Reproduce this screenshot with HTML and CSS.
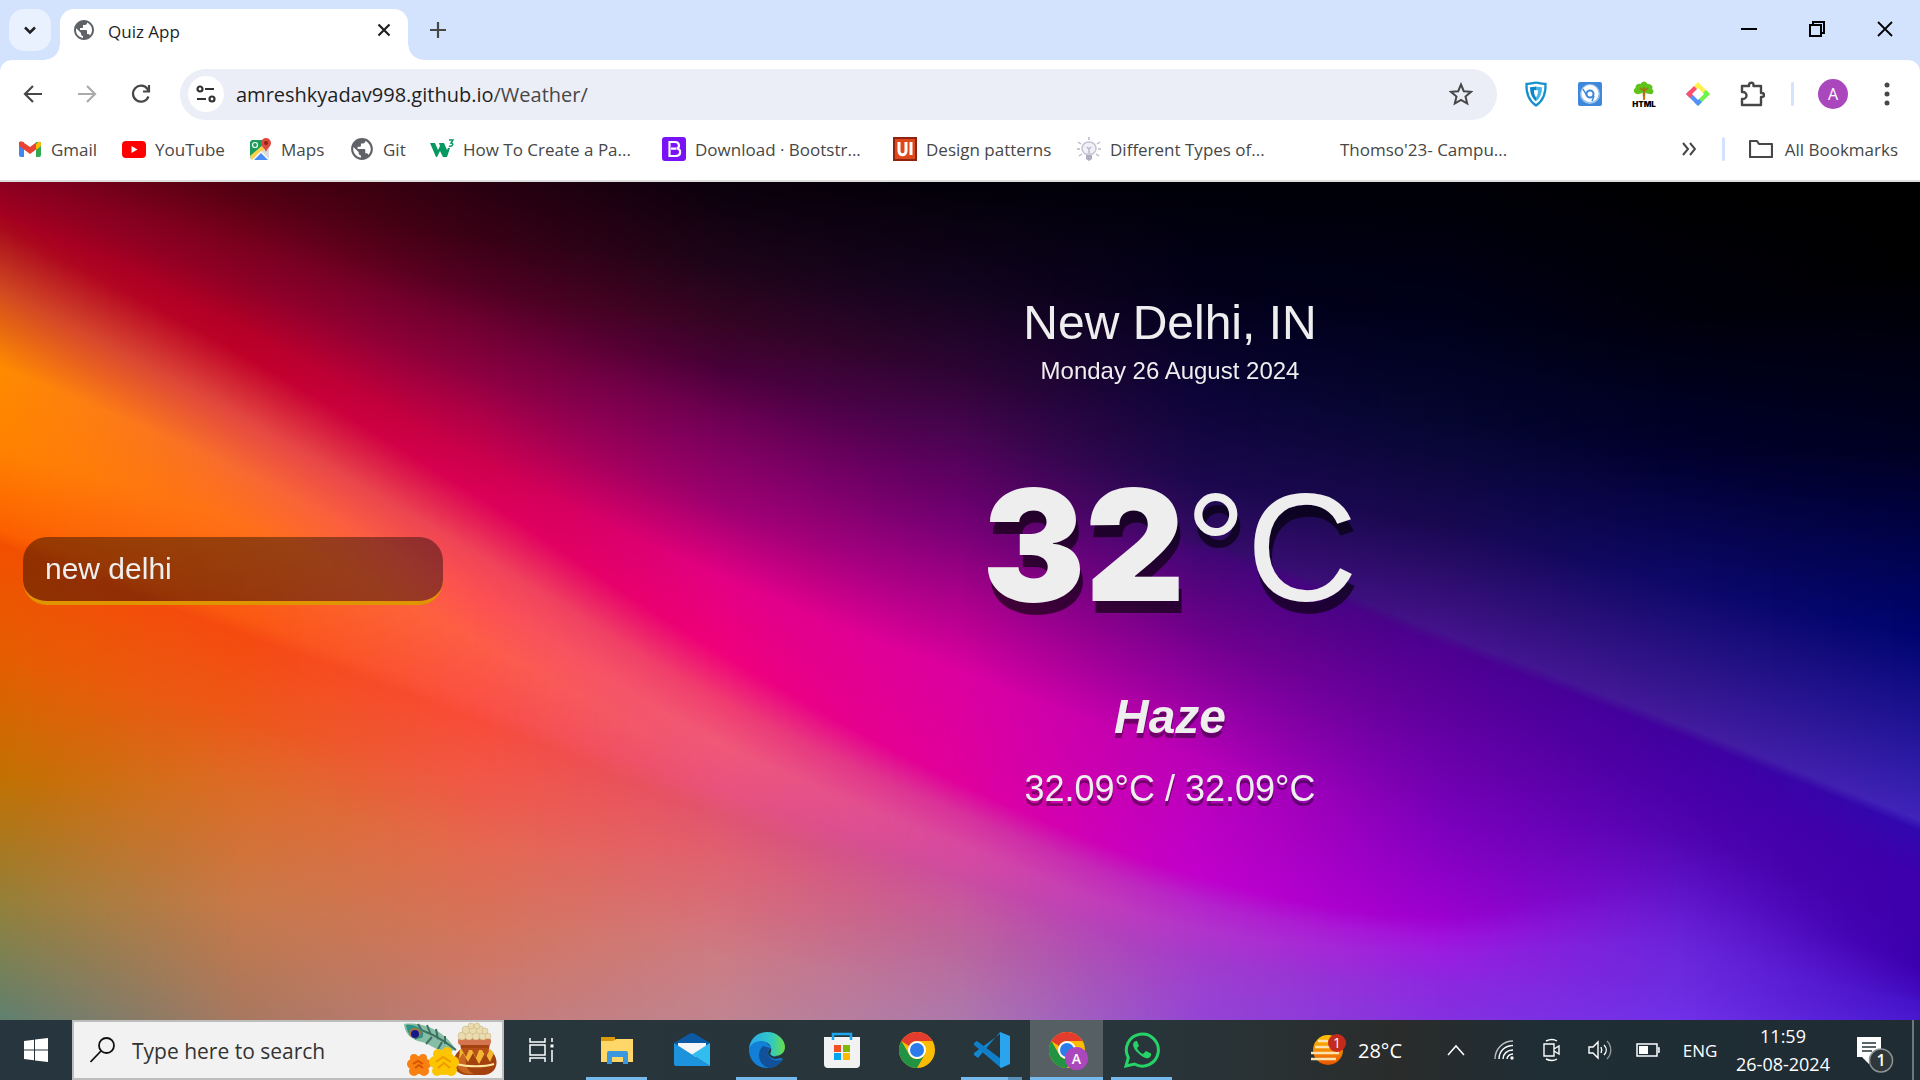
FILE: index.html
```html
<!DOCTYPE html>
<html lang="en">
<head>
<meta charset="utf-8">
<title>Quiz App</title>
<link rel="stylesheet" href="styles.css">
</head>
<body>
<svg class="defs" width="0" height="0" aria-hidden="true">
  <defs>
    <symbol id="globe" viewBox="1 1 22 22">
      <path d="M12 2C6.480 2 2 6.480 2 12s4.480 10 10 10 10-4.480 10-10S17.520 2 12 2zm-1 17.930c-3.950-.490-7-3.850-7-7.930 0-.620.080-1.210.210-1.790L9 15v1c0 1.100.900 2 2 2v1.930zm6.900-2.540c-.260-.810-1-1.390-1.900-1.390h-1v-3c0-.550-.450-1-1-1H8v-2h2c.550 0 1-.450 1-1V7h2c1.100 0 2-.900 2-2v-.410c2.930 1.190 5 4.060 5 7.410 0 2.080-.800 3.970-2.100 5.390z" fill="#5f6368"/>
    </symbol>
    <symbol id="chrome" viewBox="0 0 36 36">
      <circle cx="18" cy="18" r="18" fill="#fbbc04"/>
      <path d="M2.400 9A18 18 0 0 1 33.600 9H18a9 9 0 0 0-8 5z" fill="#e33b2e"/>
      <path d="M2.400 9A18 18 0 0 0 18 36l7.800-13.500A9 9 0 0 1 10.200 22.500z" fill="#229342"/>
      <circle cx="18" cy="18" r="9" fill="#fff"/>
      <circle cx="18" cy="18" r="7" fill="#2b7bea"/>
    </symbol>
  </defs>
</svg>

<header class="browser">
  <div class="tabstrip">
    <button class="tab-search" aria-label="Search tabs"><svg width="16" height="16" viewBox="0 0 16 16"><path d="M3 5.500l5 5 5-5" fill="none" stroke="#1f1f1f" stroke-width="2.500"/></svg></button>
    <div class="tab">
      <svg width="22" height="22"><use href="#globe"/></svg>
      <span class="tab-title">Quiz App</span>
      <button class="icon-button" aria-label="Close tab"><svg width="14" height="14" viewBox="0 0 14 14"><path d="M1.500 1.500l11 11m0-11l-11 11" stroke="#1f1f1f" stroke-width="2.200"/></svg></button>
    </div>
    <button class="new-tab" aria-label="New tab"><svg width="16" height="16" viewBox="0 0 16 16"><path d="M8 0v16M0 8h16" stroke="#474747" stroke-width="2.200"/></svg></button>
    <div class="window-controls">
      <button aria-label="Minimize"><svg width="16" height="16" viewBox="0 0 16 16"><path d="M0 7h16v2H0z"/></svg></button>
      <button aria-label="Restore"><svg width="16" height="16" viewBox="0 0 16 16"><path d="M1 4h11v11H1zM4 4V1h11v11h-3" fill="none" stroke="#000" stroke-width="2"/></svg></button>
      <button aria-label="Close"><svg width="16" height="16" viewBox="0 0 16 16"><path d="M1 1l14 14M15 1L1 15" stroke="#000" stroke-width="1.800"/></svg></button>
    </div>
  </div>

  <div class="toolbar">
    <button class="tool" aria-label="Back"><svg width="20" height="20" viewBox="0 0 20 20"><path d="M19 10H2M10 2l-8 8 8 8" fill="none" stroke="#474747" stroke-width="2.200"/></svg></button>
    <button class="tool" aria-label="Forward"><svg width="20" height="20" viewBox="0 0 20 20"><path d="M1 10h17M10 2l8 8-8 8" fill="none" stroke="#ababab" stroke-width="2.200"/></svg></button>
    <button class="tool" aria-label="Reload"><svg width="20" height="20" viewBox="0 0 20 20"><path d="M17.500 12.500A8 8 0 1 1 16.500 5L18 7M18 1v6.500h-6" fill="none" stroke="#474747" stroke-width="2.200"/></svg></button>
    <div class="omnibox">
      <button class="site-info" aria-label="Site information"><svg width="20" height="20" viewBox="0 0 20 20"><g fill="none" stroke="#303030" stroke-width="2.200"><circle cx="4" cy="5" r="2.500"/><path d="M9 5h9M1 15h9"/><circle cx="16" cy="15" r="2.500"/></g></svg></button>
      <span class="url">amreshkyadav998.github.io<span class="path">/Weather/</span></span>
      <button class="star" aria-label="Bookmark this page"><svg width="24" height="24" viewBox="0 0 24 24"><path d="M12 2.500l2.800 6.700 7.200.6-5.500 4.700 1.700 7-6.200-3.700-6.200 3.700 1.700-7L2 9.800l7.200-.6z" fill="none" stroke="#474747" stroke-width="2"/></svg></button>
    </div>
    <div class="extensions">
      <button class="tool" aria-label="VPN"><svg width="24" height="26" viewBox="0 0 24 26"><path d="M12 1.500C9 2 5 2.800 2.500 2.800 2 13 5 20 12 24.500 19 20 22 13 21.500 2.800 19 2.800 15 2 12 1.500z" fill="#fff" stroke="#1590cf" stroke-width="2.200"/><path d="M12 5.500c-2 .4-4 .8-6 .8 0 6 2 11 6 14z" fill="#0f86c8"/><path d="M12 5.500c2 .4 4 .8 6 .8 0 6-2 11-6 14z" fill="#47b5e6"/><path d="M12 9l-2 .3c0 3 .5 5.500 2 7 1.500-1.500 2-4 2-7z" fill="#fff"/></svg></button>
      <button class="tool" aria-label="Screenshot"><svg width="24" height="24" viewBox="0 0 24 24"><rect width="24" height="24" rx="2" fill="#3f87d9"/><circle cx="12" cy="12" r="10" fill="#9cc6f2"/><circle cx="12" cy="11.500" r="8.500" fill="#fff"/><circle cx="12" cy="12" r="3.500" fill="none" stroke="#3f87d9" stroke-width="2"/><path d="M5 7l4 7M14 19l2-5" stroke="#3f87d9" stroke-width="1.500"/></svg></button>
      <button class="tool" aria-label="HTML Tree"><svg width="24" height="26" viewBox="0 0 24 26"><path d="M10.500 9h3l-.5 10h-2z" fill="#c8781e"/><path d="M7 13c-5 1-7-4-3.500-6C3 3 7 2 8.500 3 10-.5 14-.5 15.500 3c4-.5 6 3 4.500 5 3 2 1 6-2.500 5l-4-1-1.500-3-1.500 3z" fill="#5ec41c"/><path d="M12 6v9M12 10l-4-3M12 10l4-3" stroke="#b06b12" stroke-width="1.500"/><text x="12" y="25.500" text-anchor="middle" class="tree-text">HTML</text></svg></button>
      <button class="tool" aria-label="Color picker"><svg width="24" height="24" viewBox="0 0 24 24"><path d="M12 0l12 12-4 4-8-8-4-4z" fill="#fff04a"/><path d="M24 12L12 24l-4-4 8-8 4-4z" fill="#6cf54c"/><path d="M0 12l4-4 12 12-4 4z" fill="#5490ff"/><path d="M12 8L4 16l-4-4 8-8z" fill="#ff4d6c"/><path d="M12 6l6 6-6 6-6-6z" fill="#fff"/></svg></button>
      <button class="tool" aria-label="Extensions"><svg width="26" height="26" viewBox="0 0 26 26"><path d="M3 5h7V4a2 2 0 0 1 4.500 0v1H22v7h1a2 2 0 0 1 0 4h-1v8H3v-6h1a3.500 3.500 0 0 0 0-7H3z" fill="none" stroke="#474747" stroke-width="2.400" stroke-linejoin="round"/></svg></button>
      <span class="divider"></span>
      <button class="tool" aria-label="Profile"><span class="avatar">A</span></button>
      <button class="tool" aria-label="Menu"><svg width="6" height="26" viewBox="0 0 6 26" fill="#474747"><circle cx="3" cy="4" r="2.500"/><circle cx="3" cy="13" r="2.500"/><circle cx="3" cy="22" r="2.500"/></svg></button>
    </div>
  </div>

  <nav class="bookmarks">
    <div class="bookmark-list">
      <a href="#"><svg width="24" height="24" viewBox="0 0 24 24"><path d="M1 5h5v15H3a2 2 0 0 1-2-2z" fill="#4285f4"/><path d="M18 5h5v13a2 2 0 0 1-2 2h-3z" fill="#34a853"/><path d="M18 7l3-2.500a2 2 0 0 1 2 1.500v3l-5 4z" fill="#fbbc04"/><path d="M1 6a2 2 0 0 1 3-1.500L12 10l6-4.500v7L12 17l-6-4.500L1 9z" fill="#ea4335"/></svg>Gmail</a>
      <a href="#"><svg width="24" height="24" viewBox="0 0 24 24"><rect y="4" width="24" height="17" rx="4" fill="#f00"/><path d="M9.500 9v7l6-3.500z" fill="#fff"/></svg>YouTube</a>
      <a href="#"><svg width="24" height="24" viewBox="0 0 24 24"><rect x="2" y="3" width="19" height="20" rx="2" fill="#dcdcdc"/><path d="M4 3h12l-1 7L3 21l-1-2V5z" fill="#1e9c5a"/><path d="M2 19L16 7l3 3L4 23z" fill="#fbd04c"/><path d="M4 23l9-9 8 8-1 1z" fill="#fff"/><path d="M6 23l7-7 7 7z" fill="#4b8df5"/><path d="M18 1a5 5 0 0 0-5 5c0 4 4 5 5 9 1-4 5-5 5-9a5 5 0 0 0-5-5z" fill="#de4b3e"/><circle cx="18" cy="6" r="2" fill="#8a231d"/><circle cx="7" cy="8" r="2.500" fill="none" stroke="#fff" stroke-width="1.200"/></svg>Maps</a>
      <a href="#"><svg width="24" height="24"><use href="#globe"/></svg>Git</a>
      <a href="#"><svg width="24" height="24" viewBox="0 0 24 24"><path d="M0 6h5l3 7 2-4-1-3h5l3 7 1-2h2l-3 9h-4l-3-6-3 6H6z" fill="#059862"/><path d="M19 3h4l-2 3c3 0 2 4-2 3" fill="none" stroke="#059862" stroke-width="1.500"/></svg>How To Create a Pa...</a>
      <a href="#"><svg width="24" height="24" viewBox="0 0 24 24"><rect width="24" height="24" rx="3" fill="#7a12f7"/><path d="M7.500 5h5.500c5 0 5 6 1.500 6.500 5 .5 5 7.500-1 7.500h-6zM9 11.700h5" fill="none" stroke="#fff" stroke-width="2.200"/></svg>Download · Bootstr...</a>
      <a href="#"><svg width="24" height="24" viewBox="0 0 24 24"><rect x="1" y="1" width="22" height="22" fill="#df481a" stroke="#8e2310" stroke-width="2"/><path d="M6 5v9c0 5 7 5 7 0V5M18 5v13" fill="none" stroke="#fff" stroke-width="3"/></svg>Design patterns</a>
      <a href="#"><svg width="24" height="24" viewBox="0 0 24 24"><path d="M8 17c-6-5-2-12 4-12s10 7 4 12z" fill="#f0f0f6" stroke="#c3c3d4" stroke-width="1.500"/><path d="M9 18h6v4l-3 2-3-2z" fill="#aeaebf"/><path d="M12 16v-4l-2-2M12 12l2-2M12 0v3M1 5l3 2M23 5l-3 2M0 12h3M21 12h3M2 19l3-2M22 19l-3-2" stroke="#b9b9cc" stroke-width="1.500" fill="none"/></svg>Different Types of...</a>
      <a href="#"><span class="blank-icon"></span>Thomso'23- Campu...</a>
    </div>
    <button class="overflow" aria-label="More bookmarks"><svg width="14" height="14" viewBox="0 0 14 14"><path d="M1 1l5 6-5 6M8 1l5 6-5 6" fill="none" stroke="#474747" stroke-width="2"/></svg></button>
    <span class="divider"></span>
    <a class="all" href="#"><svg width="24" height="24" viewBox="0 0 24 24"><path d="M1 4h7l2 3h13v13H1z" fill="none" stroke="#474747" stroke-width="2.200" stroke-linejoin="round"/></svg>All Bookmarks</a>
  </nav>
</header>

<main class="weather">
  <canvas class="backdrop" id="backdrop"></canvas>
  <input class="search-bar" type="text" aria-label="City" value="new delhi">
  <section class="report">
    <div class="city">New Delhi, IN</div>
    <div class="date">Monday 26 August 2024</div>
    <div class="temp"><span class="value">32</span>°C</div>
    <div class="condition">Haze</div>
    <div class="hi-low">32.09°C / 32.09°C</div>
  </section>
</main>

<footer class="taskbar">
  <button class="start" aria-label="Start"><svg width="24" height="24" viewBox="0 0 24 24" fill="#fff"><path d="M0 3l10-1.300v9.800H0zM11 1.500L24 0v11.500H11zM0 12.500h10v9.800L0 21zM11 12.500h13V24l-13-1.500z"/></svg></button>
  <label class="task-search">
    <svg width="26" height="26" viewBox="0 0 26 26"><g fill="none" stroke="#111" stroke-width="1.800"><circle cx="16.500" cy="8.500" r="7.500"/><path d="M11 14L.5 25"/></g></svg>
    <input type="text" aria-label="Search" placeholder="Type here to search">
    <svg width="96" height="56" viewBox="0 0 96 56">
      <path d="M2 2c12-2 38 2 52 26-14 3-22-2-30-7C12 19 3 14 2 2z" fill="#86bda5"/>
      <path d="M5 4c14 3 32 10 49 24M16 2l4 7M25 3l4 10M34 7l2 10M43 14v8M13 17l8-6M24 22l6-7M36 27l4-7" stroke="#3c6f62" stroke-width="2" fill="none"/>
      <path d="M4 3c8-1 18 3 17 12-8 4-15 0-17-12z" fill="#2d9483"/><ellipse cx="13" cy="11" rx="6" ry="5" fill="#a67648"/><ellipse cx="13" cy="12" rx="4" ry="4" fill="#141a8a"/>
      <path d="M58 21h30l-1 6c13 10 8 26-6 26H65c-14 0-19-16-6-26z" fill="#a3420f"/>
      <path d="M60 31c-8 8-6 19 6 21h6c-9-4-10-14-6-23z" fill="#c9661f"/>
      <path d="M57 27h31l4 4-4 9-5-9-6 11-6-11-5 9-5-9-4 6 1-10z" fill="#f2b632"/>
      <path d="M59 26h27l1 3-3 6-4-7h-3l-3 8-4-8h-3l-3 7-4-7z" fill="#b5501a"/>
      <path d="M55 42c10 3 28 3 37 0" fill="none" stroke="#ffe6a1" stroke-width="2"/>
      <rect x="56" y="16" width="33" height="7" rx="3" fill="#d4754f"/>
      <g fill="#eadcae" stroke="#c4ad76" stroke-width=".5"><circle cx="60" cy="14" r="4"/><circle cx="67" cy="14" r="4"/><circle cx="74" cy="14" r="4"/><circle cx="81" cy="14" r="4"/><circle cx="86" cy="14" r="3"/><circle cx="64" cy="8" r="4"/><circle cx="71" cy="8" r="4"/><circle cx="78" cy="8" r="4"/><circle cx="83" cy="9" r="3"/><circle cx="69" cy="4" r="3"/><circle cx="75" cy="4" r="3"/></g>
      <g fill="#f98112"><circle cx="17" cy="43" r="9"/><circle cx="10" cy="42" r="5"/><circle cx="24" cy="42" r="5"/><circle cx="12" cy="49" r="5"/><circle cx="22" cy="49" r="5"/><circle cx="12" cy="36" r="4"/><circle cx="21" cy="36" r="4"/></g>
      <path d="M11 42l5-3 5 3M13 46l4-3 4 3" stroke="#d65404" stroke-width="2" fill="none"/>
      <g fill="#fdc500"><circle cx="42" cy="41" r="12"/><circle cx="33" cy="40" r="6"/><circle cx="51" cy="40" r="6"/><circle cx="35" cy="49" r="5"/><circle cx="49" cy="48" r="6"/><circle cx="36" cy="32" r="5"/><circle cx="45" cy="30" r="5"/></g>
      <path d="M34 40l7-5 8 5M36 46l6-5 6 5" stroke="#f19a00" stroke-width="2" fill="none"/>
    </svg>
  </label>
  <button class="task-view" aria-label="Task view"><svg width="26" height="24" viewBox="0 0 26 24" fill="none" stroke="#fff" stroke-width="1.500"><path d="M1 0v4h15V0M1 24v-4h15v4M1 7h15v10H1zM23 0v4M23 12v12"/><path d="M21.500 8h3" stroke-width="3"/></svg></button>
  <div class="apps">
    <button class="open" aria-label="File Explorer"><svg width="36" height="36" viewBox="0 0 36 36"><path d="M2 5h14v7H2z" fill="#dd9a0a"/><path d="M2 9h12l3-2h17v23H2z" fill="#ffd768"/><path d="M8 31V21a2 2 0 0 1 2-2h17a2 2 0 0 1 2 2v11h-5v-7H13v7H8z" fill="#3b98e0"/></svg></button>
    <button aria-label="Mail"><svg width="36" height="36" viewBox="0 0 36 36"><path d="M0 11L15 2q3-2 6 0l15 9v6H0z" fill="#0c59a4"/><path d="M4 11h28v8L18 27 4 19z" fill="#f6f6f6"/><path d="M0 11l36 23H2a2 2 0 0 1-2-2z" fill="#1c93dc"/><path d="M36 11L18 22.500 36 34z" fill="#32bdf0"/></svg></button>
    <button class="open" aria-label="Edge"><svg width="36" height="36" viewBox="0 0 36 36"><defs><linearGradient id="edgeTop"><stop stop-color="#2aa9e8"/><stop offset=".6" stop-color="#30c8c8"/><stop offset="1" stop-color="#68de48"/></linearGradient></defs><path d="M0 18C0 8 8 6 16 9l8 8-2 6 12 4C30 33 25 36 18 36 8 36 0 28 0 18z" fill="#1180d6"/><path d="M14 14c-7 6-5 20 7 22 6-1 10-4 12-9-5 3-11 1-13-3-2-3-1-6 1-8z" fill="#12509a"/><path d="M0 17C1 6 9 0 18 0c11 0 18 8 18 15 0 6-5 9-10 9-4 0-6-1-5-3 4-7-3-12-9-12C6 9 1 13 0 17z" fill="url(#edgeTop)"/><path d="M22 16c1 4-2 5 0 7 3 3 8 2 11 1-2 3-7 4-10 2-5-3-5-7-1-10z" fill="#26343a"/></svg></button>
    <button aria-label="Store"><svg width="36" height="36" viewBox="0 0 36 36"><path d="M0 5h36v27a4 4 0 0 1-4 4H4a4 4 0 0 1-4-4z" fill="#f2f2f2"/><path d="M9 8V2h18v6" fill="none" stroke="#1da5f0" stroke-width="2.500"/><path d="M10 13h7v7h-7z" fill="#f25022"/><path d="M19 13h7v7h-7z" fill="#7fba00"/><path d="M10 21h7v7h-7z" fill="#00a4ef"/><path d="M19 21h7v7h-7z" fill="#ffb900"/></svg></button>
    <button aria-label="Chrome"><svg width="36" height="36"><use href="#chrome"/></svg></button>
    <button class="open stacked" aria-label="Visual Studio Code"><svg width="36" height="36" viewBox="0 0 36 36"><path d="M26 0L4 26l-4-3v-2L26 2z" fill="#1286d0"/><path d="M3 9l24 18v9L0 13v-2z" fill="#0f7fca"/><path d="M26 0l10 4v28l-9 4-1-1V0z" fill="#2ba4ee"/></svg></button>
    <button class="open active" aria-label="Chrome, profile A"><svg width="44" height="40" viewBox="0 0 44 40"><svg x="4" y="2" width="36" height="36"><use href="#chrome"/></svg><circle cx="31.500" cy="28.500" r="11.500" fill="#ab47bc"/><text x="31.500" y="34" text-anchor="middle" class="badge-letter">A</text></svg></button>
    <button class="open" aria-label="WhatsApp"><svg width="36" height="36" viewBox="0 0 36 36"><path d="M2 34l2.300-8.300A16 16 0 1 1 10.500 32z" fill="none" stroke="#25d366" stroke-width="3"/><path d="M12 9c-4 1-4 6 1 11s10 8 13 5c2-2 1-4 0-4l-4-2-3 3c-3-1-5-4-6-6l2-2-2-5z" fill="#25d366"/></svg></button>
  </div>
  <div class="tray">
    <button class="weather-chip"><svg width="38" height="36" viewBox="0 0 38 36"><defs><linearGradient id="sun" x2="0" y2="1"><stop stop-color="#ffc400"/><stop offset="1" stop-color="#e85400"/></linearGradient></defs><circle cx="18" cy="18" r="15" fill="url(#sun)"/><path d="M8 9h10M5 15h16M1 21h28M1 27h25" stroke="#fbe3b2" stroke-width="2.500"/><circle cx="27" cy="11" r="9" fill="#c42b1c"/><text x="27" y="16" text-anchor="middle" class="alert-count">1</text></svg>28°C</button>
    <button aria-label="Show hidden icons"><svg width="18" height="12" viewBox="0 0 18 12"><path d="M1 11l8-9 8 9" fill="none" stroke="#fff" stroke-width="1.500"/></svg></button>
    <button aria-label="Network"><svg width="20" height="20" viewBox="0 0 20 20" fill="none" stroke="#fff" stroke-width="1.400"><path d="M1 19C1 9 9 1 19 1" opacity=".7"/><path d="M5 19C5 11 11 5.500 19 5.500"/><path d="M9 19c0-5 4-9 10-9"/><path d="M13 19c0-3 3-5 6-5"/><circle cx="18" cy="18" r="1"/></svg></button>
    <button aria-label="Camera"><svg width="18" height="24" viewBox="0 0 18 24" fill="none" stroke="#fff" stroke-width="1.400"><path d="M3 3c4-2 8-2 11 0M3 21c4 2 8 2 11 0M1 6h10v12H1zM11 11l5-3v8l-5-3"/></svg></button>
    <button aria-label="Volume"><svg width="24" height="20" viewBox="0 0 24 20" fill="none" stroke="#fff" stroke-width="1.400"><path d="M1 7h4l5-5v16l-5-5H1zM13 7c1 2 1 4 0 6M16 5c3 3 3 7 0 10"/><path d="M19 1c5 5 5 13 0 18" opacity=".5"/></svg></button>
    <button aria-label="Battery"><svg width="24" height="14" viewBox="0 0 24 14"><path d="M1 1h20v12H1zM22 5h1v4h-1" fill="none" stroke="#fff" stroke-width="1.500"/><path d="M3 3h9v8H3z" fill="#fff"/></svg></button>
    <button class="lang">ENG</button>
    <button class="clock"><span>11:59</span><span>26-08-2024</span></button>
    <button class="notice" aria-label="Notifications"><svg width="38" height="38" viewBox="0 0 38 38"><path d="M1 2h24v20H13v7l-7-7H1z" fill="#fff"/><path d="M6 8h14M6 12h14M6 16h10" stroke="#26343a" stroke-width="1.500"/><circle cx="25" cy="25.500" r="11.500" fill="#2f3739" stroke="#8d9496" stroke-width="1.500"/><text x="25" y="31" text-anchor="middle" class="notice-count">1</text></svg></button>
    <span class="show-desktop"></span>
  </div>
</footer>
<script src="backdrop.js"></script>
</body>
</html>
```

FILE: styles.css
```css
* { box-sizing: border-box; }

body {
  margin: 0;
  min-height: 100vh;
  display: flex;
  flex-direction: column;
  font-family: "Open Sans", "Noto Sans", sans-serif;
  color: #1f1f1f;
  background: #d3e3fd;
}

button {
  display: flex;
  align-items: center;
  justify-content: center;
  padding: 0;
  border: 0;
  background: none;
  color: inherit;
  font: inherit;
}

a { color: inherit; text-decoration: none; }
svg { flex: none; }
.defs { position: absolute; }

/* Browser frame */
.tabstrip { display: flex; height: 60px; padding: 9px 1px 0 9px; }
.tab-search { width: 42px; height: 42px; border-radius: 15px; background: #e9f1fe; }
.tab {
  position: relative;
  display: flex;
  align-items: center;
  gap: 13px;
  width: 348px;
  height: 51px;
  margin-left: 9px;
  padding: 0 12px 9px 13px;
  border-radius: 14px 14px 0 0;
  background: #fff;
  font-size: 17px;
}
.tab::before,
.tab::after {
  content: "";
  position: absolute;
  bottom: 0;
  width: 15px;
  height: 15px;
}
.tab::before { right: 100%; background: radial-gradient(circle at 0 0, transparent 14px, #fff 15px); }
.tab::after { left: 100%; background: radial-gradient(circle at 100% 0, transparent 14px, #fff 15px); }
.tab-title { flex: 1; padding-top: 2px; }
.icon-button { width: 24px; height: 24px; }
.new-tab { width: 42px; height: 42px; margin-left: 9px; }
.window-controls { display: flex; margin-left: auto; height: 40px; }
.window-controls button { width: 68px; }

.toolbar {
  display: flex;
  align-items: center;
  height: 68px;
  padding: 0 6px;
  border-radius: 12px 12px 0 0;
  background: #fff;
}
.tool { width: 54px; height: 50px; }
.omnibox {
  flex: 1;
  display: flex;
  align-items: center;
  height: 51px;
  margin: 0 12px;
  padding: 0 20px 0 8px;
  border-radius: 26px;
  background: #ebeef7;
}
.site-info { width: 36px; height: 36px; border-radius: 50%; background: #fff; }
.url { flex: 1; padding-left: 12px; font-size: 20px; }
.path { color: #474747; }
.star { width: 32px; height: 32px; }
.extensions { display: flex; align-items: center; }
.divider { width: 3px; height: 24px; margin: 0 12px; border-radius: 2px; background: #d3e3fd; }
.avatar {
  width: 30px;
  border-radius: 50%;
  background: #ab47bc;
  color: #fff;
  font-size: 16px;
  line-height: 30px;
}
.tree-text { font: 900 8px "Inter", sans-serif; }

.bookmarks {
  display: flex;
  align-items: center;
  height: 54px;
  padding: 0 22px 10px 18px;
  border-bottom: 2px solid #dedede;
  background: #fff;
  color: #474747;
  font-size: 17px;
  white-space: nowrap;
}
.bookmark-list {
  flex: 1;
  display: grid;
  grid-template-columns: 104px 126px 102px 80px 232px 231px 184px 230px 1fr;
}
.bookmarks a { display: flex; align-items: center; gap: 9px; }
.bookmarks .all { gap: 12px; }
.blank-icon { width: 24px; }
.overflow { width: 28px; height: 28px; }
.bookmarks .divider { margin: 0 24px 0 19px; }

/* Weather page */
.weather {
  position: relative;
  isolation: isolate;
  flex: 1;
  display: flex;
  align-items: flex-start;
  padding: 113px 23px 0;
  color: #eee;
  font-family: "Liberation Sans", Arial, sans-serif;
}
.backdrop { position: absolute; inset: 0; z-index: -1; width: 100%; height: 100%; }
.search-bar {
  width: 420px;
  height: 68px;
  margin-top: 242px;
  padding: 0 22px;
  border: 0;
  border-bottom: 4px solid #e09400;
  border-radius: 24px;
  background: rgba(0, 0, 0, .4);
  background-clip: padding-box;
  color: #eee;
  font: 30px "Liberation Sans", Arial, sans-serif;
}
.report { flex: 1; text-align: center; white-space: nowrap; }
.city { font-size: 48px; line-height: 56px; }
.date { margin-top: 6px; font-size: 24px; line-height: 28px; }
.temp { margin-top: 74px; height: 172px; font-size: 154px; line-height: 172px; text-shadow: 3px 12px rgba(0, 0, 0, .6); }
.value { font-family: "Inter", "Liberation Sans", sans-serif; font-weight: 900; }
.condition { margin-top: 58px; font-size: 48px; font-style: italic; font-weight: 700; line-height: 56px; text-shadow: 0 5px rgba(0, 0, 0, .4); }
.hi-low { margin-top: 23px; font-size: 36px; line-height: 42px; text-shadow: 0 5px rgba(0, 0, 0, .4); }

/* Taskbar */
.taskbar {
  display: flex;
  align-items: stretch;
  height: 60px;
  background: linear-gradient(90deg, #27363e, #28353a 60%, #2a2c2b 73%, #1f2d35 80%, #1f2c34);
  color: #fff;
}
.start { width: 72px; }
.task-search {
  display: flex;
  align-items: center;
  width: 432px;
  padding: 0 4px 0 16px;
  border: 2px solid #bdbdbd;
  background: #f2f2f2;
}
.task-search input {
  flex: 1;
  min-width: 0;
  height: 44px;
  padding: 2px 0 0 16px;
  border: 0;
  background: none;
  font: 21px "Open Sans", "Noto Sans", sans-serif;
}
.task-search input::placeholder { color: #333; opacity: 1; }
.task-view { width: 75px; }
.apps { display: flex; }
.apps button { position: relative; width: 75px; }
.apps .open::after {
  content: "";
  position: absolute;
  inset: auto 7px 0;
  height: 3px;
  background: #76b9ed;
}
.apps .stacked::after { background: linear-gradient(90deg, #76b9ed 47px, #5990ba 47px); }
.apps .active { width: 73px; margin: 0 1px; background: #566064; }
.apps .active::after { inset: auto 0 0; }
.badge-letter { font: 600 14px "Open Sans", sans-serif; fill: #fff; }

.tray { display: flex; margin-left: auto; }
.tray button { width: 48px; }
.tray .weather-chip { width: auto; gap: 10px; margin-right: 30px; font-size: 20px; }
.alert-count { font: 14px "Open Sans", sans-serif; fill: #fff; }
.tray .lang { width: 56px; font-size: 17px; }
.tray .clock { width: 110px; flex-direction: column; font-size: 18px; line-height: 28px; }
.tray .notice { width: 74px; padding-top: 8px; }
.notice-count { font: 600 16px "Open Sans", sans-serif; fill: #fff; }
.show-desktop { width: 8px; border-left: 2px solid #6e777b; }
```

FILE: backdrop.js
```js
// Paints the colour waves behind the weather report. Each column lists the
// same bands from top to bottom as "position colour"; the bands are
// interpolated from one column to the next.
const UNIT = 1568;
const columns = [
  "0 8c0020,5 8e0020,10 900020,15 920020,20 940020,25 960020,35 9a001f,55 a2001f,85 a80a1c,200 cf4820,345 ff8a00,500 ff8200,650 fc6000,678 f25000,880 e65c00,1110 c27000,1350 94803a,1568 5f8070",
  "0 4e0010,40 5c0014,80 6c0018,120 7c001e,150 840022,180 8c0024,220 9c0026,270 b40026,320 be0028,440 e44840,540 f86a30,640 ff7018,815 fa5810,845 f64a10,1000 ec5818,1140 dc6c28,1350 c87848,1568 a87860",
  "0 280010,100 380014,200 520022,260 6c0030,310 7c0038,360 8c0040,440 b00048,520 cc004c,590 dc0058,700 f04458,780 fc5052,860 fe5c48,980 fa5044,1010 f84c3a,1130 f05848,1250 e46850,1400 d4745c,1568 c47c78",
  "0 0a000c,150 1c0418,260 340422,350 480038,430 6a0050,500 800060,600 9c0070,740 e40084,880 f0007a,970 f03c70,1050 f05878,1100 ec547c,1140 e8527c,1185 e05470,1260 e06070,1350 d86c78,1450 cc7c84,1568 c08490",
  "0 020008,200 12041e,350 2c0432,470 480450,580 640068,660 7c0078,760 a40088,920 dc00a0,1125 e0009c,1180 d8309c,1240 d848a0,1270 d44aa0,1300 cc4ca0,1330 c8549e,1370 c45c9c,1420 bc649c,1500 b470a4,1568 ac78ac",
  "0 000008,200 020018,400 0c0438,560 1a084c,670 320a64,692 400674,850 70008c,1080 b800b8,1300 c000cc,1350 b424cc,1400 b034cc,1420 ac36cc,1440 a639cc,1460 a03ccc,1480 9e3ece,1500 9c40d0,1530 9842d2,1568 9444d4",
  "0 000006,250 00001a,450 050630,640 180850,842 44128c,864 4c0090,980 5c009c,1200 7c00bc,1375 9c00d0,1410 a010dc,1440 9a1ce0,1465 9520e0,1485 9024e0,1500 8c28e0,1520 8a2ae0,1535 882ce0,1552 862ee0,1568 8430e0",
  "0 000000,250 00000c,500 00002c,750 0c0868,1014 421a9c,1036 4000a0,1130 4800a8,1220 5004b0,1310 5c10c4,1380 661cd2,1430 6a24da,1470 6c28dc,1500 6c2ade,1520 6d2ce1,1535 6e2de2,1545 6e2ee4,1556 6f2fe6,1568 7030e8",
  "0 000000,150 000000,500 000022,850 000470,1194 4024bc,1214 3008b0,1300 3c00ac,1400 3c00ac,1470 3c00b0,1500 4006b8,1525 420cc0,1534 4411c9,1542 4512ca,1548 4613cb,1553 4614cc,1558 4716cd,1563 4717ce,1568 4818d0"
].map(column => column.split(",").map(stop => {
  const [at, hex] = stop.split(" ");
  return [Number(at), ...[0, 2, 4].map(i => parseInt(hex.slice(i, i + 2), 16))];
}));

const canvas = document.getElementById("backdrop");
const context = canvas.getContext("2d");

// Cubic interpolation keeps the bands smooth where the columns join.
function curve(a, b, c, d, t) {
  return b + 0.5 * t * (c - a + t * (2 * a - 5 * b + 4 * c - d + t * (3 * (b - c) + d - a)));
}

function paint() {
  const width = canvas.width = canvas.clientWidth;
  const height = canvas.height = canvas.clientHeight;
  const last = columns.length - 1;
  for (let x = 0; x < width; x++) {
    const place = x / width * last;
    const i = Math.floor(place);
    const t = place - i;
    const pick = k => columns[Math.max(0, Math.min(last, k))];
    const gradient = context.createLinearGradient(0, 0, 0, height);
    columns[0].forEach((_, s) => {
      const before = i > 0 ? pick(i - 1)[s][0] : 2 * pick(0)[s][0] - pick(1)[s][0];
      const after = i + 2 <= last ? pick(i + 2)[s][0] : 2 * pick(last)[s][0] - pick(last - 1)[s][0];
      const at = curve(before, pick(i)[s][0], pick(i + 1)[s][0], after, t);
      const rgb = [1, 2, 3].map(n => Math.round(pick(i)[s][n] * (1 - t) + pick(i + 1)[s][n] * t));
      gradient.addColorStop(Math.max(0, Math.min(1, at / UNIT)), `rgb(${rgb})`);
    });
    context.fillStyle = gradient;
    context.fillRect(x, 0, 1, height);
  }
}

paint();
window.addEventListener("resize", paint);
```
